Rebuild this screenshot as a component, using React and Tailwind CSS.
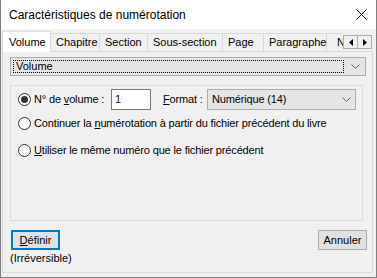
import React from "react";

// petits éléments réutilisés dans la boîte de dialogue
function Chevron() {
  return (
    <svg width="9" height="5" viewBox="0 0 9 5" className="block">
      <path d="M0.5 0.5 L4.5 4.5 L8.5 0.5" fill="none" stroke="#606060" strokeWidth="1" />
    </svg>
  );
}

function Radio({ checked }) {
  return (
    <span className="flex h-[13px] w-[13px] shrink-0 items-center justify-center rounded-full border border-[#333333] bg-white">
      {checked && <span className="h-[7px] w-[7px] rounded-full bg-[#333333]" />}
    </span>
  );
}

const tabs = ["Chapitre", "Section", "Sous-section", "Page", "Paragraphe"];
const tabWidths = ["w-[49px]", "w-[48px]", "w-[75px]", "w-[41px]", "w-[63px]"];

export default function App() {
  return (
    <div className="flex h-[278px] w-[377px] flex-col overflow-hidden border-x border-b border-[#7f7f7f] bg-[#f0f0f0] font-['Liberation_Sans',Arial,sans-serif] text-[11px] leading-none text-black">
      {/* barre de titre */}
      <div className="flex h-[29px] shrink-0 items-center justify-between bg-white pl-[8px] pr-[9px]">
        <span className="text-[12px]">Caractéristiques de numérotation</span>
        <svg width="11" height="11" viewBox="0 0 11 11">
          <path d="M0.5 0.5 L10.5 10.5 M10.5 0.5 L0.5 10.5" stroke="#000" strokeWidth="1" />
        </svg>
      </div>

      {/* onglets */}
      <div className="relative z-10 ml-[1px] mt-[2px] flex h-[20px] shrink-0 items-end">
        <div className="-mb-px flex h-[21px] w-[49px] items-center border border-b-0 border-[#d9d9d9] bg-white pl-[6px]">
          Volume
        </div>
        {tabs.map((t, i) => (
          <div
            key={t}
            className={`flex h-[18px] ${tabWidths[i]} items-center border-r border-t border-[#d9d9d9] bg-[#f0f0f0] pl-[5px]`}
          >
            {t}
          </div>
        ))}
        <div className="flex h-[18px] w-[16px] items-center overflow-hidden border-t border-[#d9d9d9] pl-[10px]">
          N
        </div>
        <div className="absolute right-[4px] top-[4px] flex">
          <div className="flex h-[14px] w-[15px] items-center justify-center border border-[#adadad] bg-[#f0f0f0]">
            <svg width="4" height="7" viewBox="0 0 4 7">
              <path d="M4 0 L0 3.5 L4 7 Z" fill="#000" />
            </svg>
          </div>
          <div className="-ml-px flex h-[14px] w-[15px] items-center justify-center border border-[#adadad] bg-[#f0f0f0]">
            <svg width="4" height="7" viewBox="0 0 4 7">
              <path d="M0 0 L4 3.5 L0 7 Z" fill="#000" />
            </svg>
          </div>
        </div>
      </div>

      {/* panneau */}
      <div className="ml-[1px] flex h-[222px] w-[371px] shrink-0 flex-col border border-[#d9d9d9] bg-[#f0f0f0]">
        {/* liste déroulante */}
        <div className="ml-[7px] mt-[5px] flex h-[19px] w-[356px] items-center border border-[#adadad] bg-[#e5e5e5] pl-[2px] pr-[5px]">
          <div className="flex h-[13px] w-[331px] items-center border border-dotted border-black pl-[2px]">
            Volume
          </div>
          <div className="ml-auto">
            <Chevron />
          </div>
        </div>

        {/* cadre */}
        <div className="ml-[7px] mt-[9px] flex h-[136px] w-[353px] flex-col border border-[#dcdcdc] pl-[7px] tracking-[-0.15px]">
          <div className="mt-[3px] flex h-[21px] items-center">
            <Radio checked />
            <span className="ml-[3px] w-[77px]">
              N° de <span className="underline">v</span>olume :
            </span>
            <div className="flex h-[21px] w-[40px] items-center border border-[#7a7a7a] bg-white pl-[3px] text-[#1b0f3f]">
              1
            </div>
            <span className="ml-[12px] w-[44px]">
              <span className="underline">F</span>ormat :
            </span>
            <div className="flex h-[21px] w-[149px] items-center border border-[#adadad] bg-[#e5e5e5] pl-[4px] pr-[4px]">
              Numérique (14)
              <div className="ml-auto">
                <Chevron />
              </div>
            </div>
          </div>
          <div className="mt-[5px] flex h-[16px] items-center">
            <Radio />
            <span className="ml-[3px]">
              Continuer la <span className="underline">n</span>umérotation à partir du fichier précédent du livre
            </span>
          </div>
          <div className="mt-[11px] flex h-[16px] items-center">
            <Radio />
            <span className="ml-[3px]">
              <span className="underline">U</span>tiliser le même numéro que le fichier précédent
            </span>
          </div>
        </div>

        {/* boutons */}
        <div className="mt-[9px] flex items-start pl-[8px] pr-[5px]">
          <div className="flex h-[20px] w-[49px] items-center justify-center border-2 border-[#0078d7] bg-[#e1e1e1]">
            <span>
              <span className="underline">D</span>éfinir
            </span>
          </div>
          <div className="ml-auto flex h-[20px] w-[49px] items-center justify-center border border-[#adadad] bg-[#e1e1e1]">
            Annuler
          </div>
        </div>
        <div className="ml-[7px] mt-[3px]">(Irréversible)</div>
      </div>
    </div>
  );
}
